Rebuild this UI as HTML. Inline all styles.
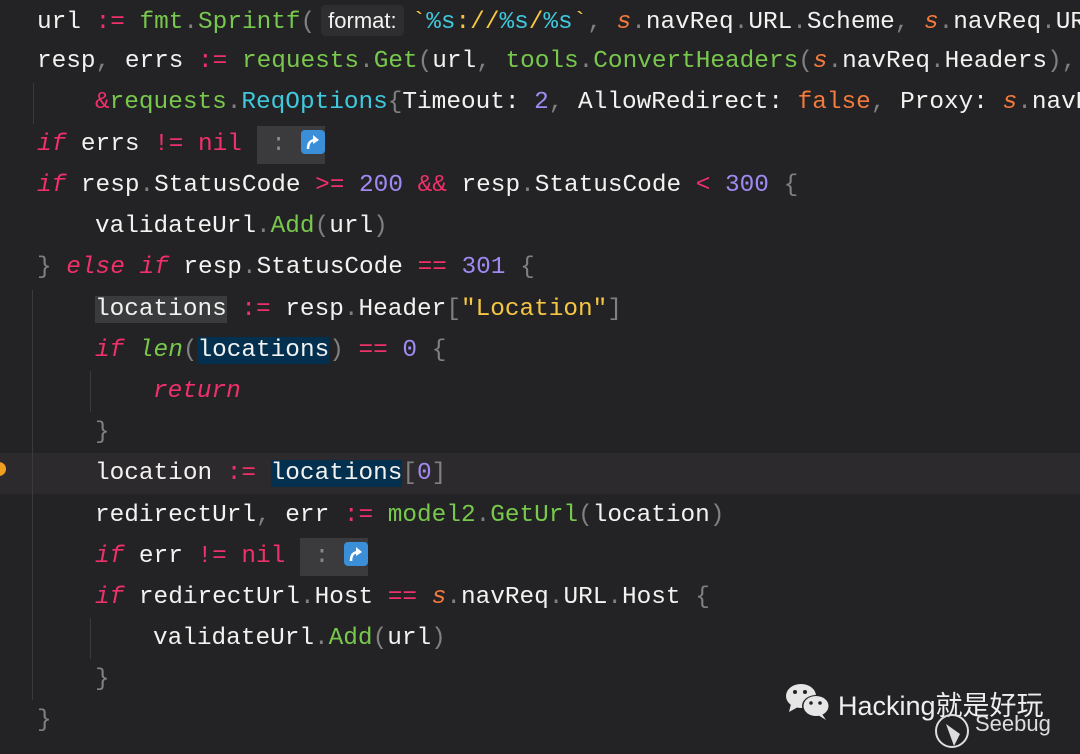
<!DOCTYPE html>
<html><head><meta charset="utf-8"><style>
body{margin:0;width:1080px;height:754px;background:#232225;overflow:hidden;position:relative;font-family:"Liberation Mono",monospace;font-size:24.4px;color:#f2f2f0}
.l{position:absolute;height:41px;line-height:41px;white-space:pre}
.p{color:#f0306a}.i{font-style:italic}.g{color:#78c84c}.c{color:#3ec9dc}.y{color:#f5c644}.v{color:#a08af2}.o{color:#f37a3c}.d{color:#808080}
.hl{position:absolute;left:0;width:1080px;height:41px;background:#2c2a2d}
.gd{position:absolute;width:1px;background:#3a393c}
.hint{font-family:"Liberation Sans",sans-serif;font-size:22px;background:#2e2e30;padding:3px 7px;margin:0 8px 0 6px;border-radius:4px;color:#f2f2f0}
.sel{background:#04304f}
.rd{background:#3a3b3d}
.fold{background:#3b3a3d;color:#888;padding:5px 0 6px}
.ic{display:inline-block;width:24px;height:24px;vertical-align:-4px}
</style></head><body>
<div class="hl" style="top:453px"></div>
<div style="position:absolute;left:-8px;top:462px;width:14px;height:14px;border-radius:50%;background:#f0a020"></div>
<div class="gd" style="left:33px;top:83px;height:41px"></div>
<div class="gd" style="left:32px;top:290px;height:410px"></div>
<div class="gd" style="left:90px;top:371px;height:41px"></div>
<div class="gd" style="left:90px;top:618px;height:41px"></div>

<div class="l" style="left:37px;top:0">url <span class="p">:=</span> <span class="g">fmt</span><span class="d">.</span><span class="g">Sprintf</span><span class="d">(</span><span class="hint">format:</span><span class="y">`</span><span class="c">%s</span><span class="y">://</span><span class="c">%s</span><span class="y">/</span><span class="c">%s</span><span class="y">`</span><span class="d">,</span> <span class="o i">s</span><span class="d">.</span>navReq<span class="d">.</span>URL<span class="d">.</span>Scheme<span class="d">,</span> <span class="o i">s</span><span class="d">.</span>navReq<span class="d">.</span>URL</div>
<div class="l" style="left:37px;top:41px">resp<span class="d">,</span> errs <span class="p">:=</span> <span class="g">requests</span><span class="d">.</span><span class="g">Get</span><span class="d">(</span>url<span class="d">,</span> <span class="g">tools</span><span class="d">.</span><span class="g">ConvertHeaders</span><span class="d">(</span><span class="o i">s</span><span class="d">.</span>navReq<span class="d">.</span>Headers<span class="d">),</span></div>
<div class="l" style="left:95px;top:82px"><span class="p">&amp;</span><span class="g">requests</span><span class="d">.</span><span class="c">ReqOptions</span><span class="d">{</span>Timeout: <span class="v">2</span><span class="d">,</span> AllowRedirect: <span class="o">false</span><span class="d">,</span> Proxy: <span class="o i">s</span><span class="d">.</span>navReq</div>
<div class="l" style="left:37px;top:124px"><span class="p i">if</span> errs <span class="p">!=</span> <span class="p">nil</span> <span class="fold"> : <svg class="ic" viewBox="0 0 24 24"><rect width="24" height="24" rx="4" fill="#3a8fd8"/><path d="M7 19 C7 12 10 10 15 10" fill="none" stroke="#fff" stroke-width="2.6"/><path d="M12 5 L18 10 L12 14Z" fill="#fff"/></svg></span></div>
<div class="l" style="left:37px;top:165px"><span class="p i">if</span> resp<span class="d">.</span>StatusCode <span class="p">&gt;=</span> <span class="v">200</span> <span class="p">&amp;&amp;</span> resp<span class="d">.</span>StatusCode <span class="p">&lt;</span> <span class="v">300</span> <span class="d">{</span></div>
<div class="l" style="left:95px;top:206px">validateUrl<span class="d">.</span><span class="g">Add</span><span class="d">(</span>url<span class="d">)</span></div>
<div class="l" style="left:37px;top:247px"><span class="d">}</span> <span class="p i">else if</span> resp<span class="d">.</span>StatusCode <span class="p">==</span> <span class="v">301</span> <span class="d">{</span></div>
<div class="l" style="left:95px;top:289px"><span class="rd">locations</span> <span class="p">:=</span> resp<span class="d">.</span>Header<span class="d">[</span><span class="y">"Location"</span><span class="d">]</span></div>
<div class="l" style="left:95px;top:330px"><span class="p i">if</span> <span class="g i">len</span><span class="d">(</span><span class="sel">locations</span><span class="d">)</span> <span class="p">==</span> <span class="v">0</span> <span class="d">{</span></div>
<div class="l" style="left:153px;top:371px"><span class="p i">return</span></div>
<div class="l" style="left:95px;top:412px"><span class="d">}</span></div>
<div class="l" style="left:95px;top:453px">location <span class="p">:=</span> <span class="sel">locations</span><span class="d">[</span><span class="v">0</span><span class="d">]</span></div>
<div class="l" style="left:95px;top:495px">redirectUrl<span class="d">,</span> err <span class="p">:=</span> <span class="g">model2</span><span class="d">.</span><span class="g">GetUrl</span><span class="d">(</span>location<span class="d">)</span></div>
<div class="l" style="left:95px;top:536px"><span class="p i">if</span> err <span class="p">!=</span> <span class="p">nil</span> <span class="fold"> : <svg class="ic" viewBox="0 0 24 24"><rect width="24" height="24" rx="4" fill="#3a8fd8"/><path d="M7 19 C7 12 10 10 15 10" fill="none" stroke="#fff" stroke-width="2.6"/><path d="M12 5 L18 10 L12 14Z" fill="#fff"/></svg></span></div>
<div class="l" style="left:95px;top:577px"><span class="p i">if</span> redirectUrl<span class="d">.</span>Host <span class="p">==</span> <span class="o i">s</span><span class="d">.</span>navReq<span class="d">.</span>URL<span class="d">.</span>Host <span class="d">{</span></div>
<div class="l" style="left:153px;top:618px">validateUrl<span class="d">.</span><span class="g">Add</span><span class="d">(</span>url<span class="d">)</span></div>
<div class="l" style="left:95px;top:659px"><span class="d">}</span></div>
<div class="l" style="left:37px;top:700px"><span class="d">}</span></div>

<svg style="position:absolute;left:784px;top:682px" width="48" height="40" viewBox="0 0 48 40">
<ellipse cx="17" cy="14" rx="15" ry="12" fill="#e6e6e6"/><path d="M7 22 L5 30 L14 25Z" fill="#e6e6e6"/>
<ellipse cx="32" cy="24" rx="14" ry="11" fill="#232225"/>
<ellipse cx="32" cy="24" rx="12.5" ry="10" fill="#e6e6e6"/><path d="M38 32 L42 38 L34 33Z" fill="#e6e6e6"/>
<circle cx="11" cy="10" r="2" fill="#232225"/><circle cx="21" cy="10" r="2" fill="#232225"/>
<circle cx="27" cy="21" r="1.8" fill="#232225"/><circle cx="36" cy="21" r="1.8" fill="#232225"/>
</svg>
<div style="position:absolute;left:838px;top:684px;font-family:'Liberation Sans','Noto Sans CJK SC',sans-serif;font-size:27px;color:#eee;white-space:nowrap">Hacking就是好玩</div>
<svg style="position:absolute;left:932px;top:712px" width="40" height="38"><circle cx="20" cy="19" r="16" fill="none" stroke="#ddd" stroke-width="2"/><path d="M14 12 L28 22 L22 34 Z" fill="#ddd"/></svg>
<div style="position:absolute;left:975px;top:711px;font-family:'Liberation Sans',sans-serif;font-size:22px;color:#ddd">Seebug</div>
</body></html>
